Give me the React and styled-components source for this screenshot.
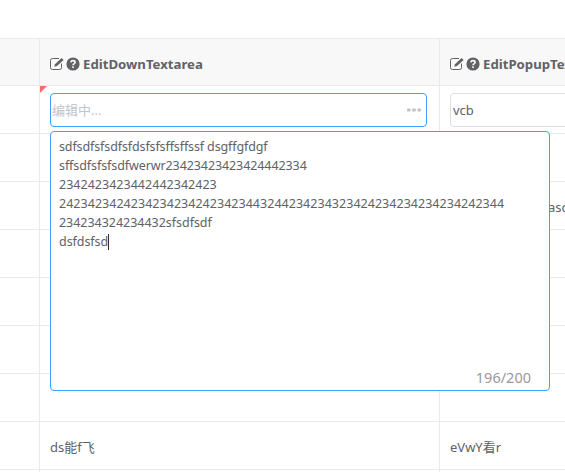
import React from 'react';
import styled, { createGlobalStyle } from 'styled-components';

const Global = createGlobalStyle`
  * { box-sizing: border-box; }
  body {
    margin: 0;
    background: #fff;
    color: #606266;
    font: 13px/18px "Noto Sans", "Noto Sans CJK SC", sans-serif;
    overflow: hidden;
  }
`;

const Page = styled.div`
  width: 565px;
  height: 472px;
  padding-top: 38px;
  overflow: hidden;
`;

const Grid = styled.div`
  border-top: 1px solid #e8eaec;
  width: 840px;
`;

const Row = styled.div`
  display: grid;
  grid-template-columns: 40px 400px 400px;
  height: ${(p) => p.$height || 48}px;
  background: ${(p) => (p.$head ? '#f8f8f9' : '#fff')};
`;

const Cell = styled.div`
  position: relative;
  display: flex;
  align-items: center;
  padding: ${(p) => p.$top || 0}px 12px 0 ${(p) => p.$left || 10}px;
  border-right: 1px solid #e8eaec;
  border-bottom: 1px solid #e8eaec;
  white-space: nowrap;
`;

const Title = styled.span`
  font-size: 13.2px;
  font-weight: 700;
  margin-left: 3px;
`;

const Dirty = styled.i`
  position: absolute;
  left: 0;
  top: 0;
  border-top: 7px solid #f56c6c;
  border-right: 7px solid transparent;
`;

const Input = styled.div`
  display: flex;
  align-items: center;
  justify-content: space-between;
  flex: 1;
  height: 34px;
  padding: 1px 5px 0 ${(p) => (p.$active ? 1 : 2)}px;
  border: 1px solid ${(p) => (p.$active ? '#409eff' : '#dcdfe6')};
  border-radius: 4px;
  background: #fff;
`;

const Placeholder = styled.span`
  color: #c0c4cc;
`;

const Panel = styled.div`
  position: absolute;
  left: 10px;
  top: 45px;
  z-index: 2;
  width: 500px;
  height: 260px;
  border: 1px solid #409eff;
  border-radius: 4px;
  background: #fff;
  padding: 5px 8px;
  font-size: 12.5px;
`;

const Line = styled.div`
  height: 19px;
  line-height: 19px;
  letter-spacing: ${(p) => p.$spacing || 0}px;
`;

const Caret = styled.span`
  display: inline-block;
  width: 1px;
  height: 16px;
  background: #303133;
  vertical-align: -4px;
`;

const Counter = styled.div`
  position: absolute;
  right: 18px;
  bottom: 3px;
  color: #999;
  font-size: 14.5px;
  line-height: 19px;
`;

const Svg = styled.svg`
  display: block;
  flex: none;
`;

const EditIcon = () => (
  <Svg width="15" height="14" viewBox="0 0 15 14" fill="none">
    <path d="M9 1.5H2.5Q.5 1.5 .5 3.5V10.5Q.5 12.5 2.5 12.5H9.5Q11.5 12.5 11.5 10.5V6.5" stroke="#606266" />
    <path d="M4.2 9.8L5 7.2L11.5 1L13.6 3L7 9.1Z" fill="#606266" />
  </Svg>
);

const HelpIcon = () => (
  <Svg width="15" height="14" viewBox="0 0 15 14" fill="none">
    <circle cx="8" cy="7" r="6.6" fill="#606266" />
    <path d="M5.9 5.3Q6.1 3.6 8 3.6Q10.1 3.6 10.1 5.2Q10.1 6.1 9 6.7Q8 7.2 8 8.3" stroke="#f8f8f9" strokeWidth="1.6" />
    <path d="M7.2 9.3H8.8V10.9H7.2Z" fill="#f8f8f9" />
  </Svg>
);

const MoreIcon = () => (
  <Svg width="14" height="4" viewBox="0 0 14 4" fill="#c0c4cc">
    <rect x="0" y=".5" width="3.6" height="3" rx=".8" />
    <rect x="5.2" y=".5" width="3.6" height="3" rx=".8" />
    <rect x="10.4" y=".5" width="3.6" height="3" rx=".8" />
  </Svg>
);

const lines = [
  ['sdfsdfsfsdfsfdsfsfsffsffssf dsgffgfdgf', -0.12],
  ['sffsdfsfsfsdfwerwr23423423423424442334', -0.09],
  ['2342423423442442342423', 0.02],
  ['24234234242342342342423423443244234234323424234234234234242344', 0.03],
  ['234234324234432sfsdfsdf', -0.03],
  ['dsfdsfsd', -0.06],
];

const rows = [
  { down: '', popup: '' },
  { down: '', popup: 'asd', indent: 108 },
  { down: '', popup: '' },
  { down: '', popup: '' },
  { down: '', popup: '' },
  { down: '', popup: '' },
  { down: 'ds能f飞', popup: 'eVwY看r' },
  { down: '', popup: '' },
];

export default function App() {
  return (
    <Page>
      <Global />
      <Grid>
        <Row $head $height={47}>
          <Cell />
          <Cell $top={4}><EditIcon /><HelpIcon /><Title>EditDownTextarea</Title></Cell>
          <Cell $top={4}><EditIcon /><HelpIcon /><Title>EditPopupTextarea</Title></Cell>
        </Row>
        <Row>
          <Cell />
          <Cell>
            <Dirty />
            <Input $active><Placeholder>编辑中...</Placeholder><MoreIcon /></Input>
            <Panel>
              {lines.map(([text, spacing], i) => (
                <Line key={text} $spacing={spacing}>
                  {text}{i === lines.length - 1 && <Caret />}
                </Line>
              ))}
              <Counter>196/200</Counter>
            </Panel>
          </Cell>
          <Cell><Input>vcb</Input></Cell>
        </Row>
        {rows.map(({ down, popup, indent }, i) => (
          <Row key={i}>
            <Cell />
            <Cell $top={2}>{down}</Cell>
            <Cell $top={2} $left={indent}>{popup}</Cell>
          </Row>
        ))}
      </Grid>
    </Page>
  );
}
